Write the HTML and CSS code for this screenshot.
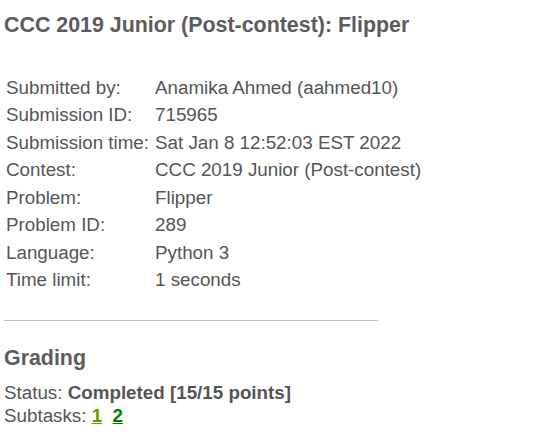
FILE: index.html
```html
<!DOCTYPE html>
<html lang="en">
<head>
    <meta charset="UTF-8">
    <title>Submission 715965</title>
    <link rel="stylesheet" href="styles.css">
</head>
<body>
    <div class="content">
        <h2>CCC 2019 Junior (Post-contest): Flipper</h2>

        <table class="info">
            <tr><td>Submitted by:</td><td>Anamika Ahmed (aahmed10)</td></tr>
            <tr><td>Submission ID:</td><td>715965</td></tr>
            <tr><td>Submission time:</td><td>Sat Jan 8 12:52:03 EST 2022</td></tr>
            <tr><td>Contest:</td><td>CCC 2019 Junior (Post-contest)</td></tr>
            <tr><td>Problem:</td><td>Flipper</td></tr>
            <tr><td>Problem ID:</td><td>289</td></tr>
            <tr><td>Language:</td><td>Python 3</td></tr>
            <tr><td>Time limit:</td><td>1 seconds</td></tr>
        </table>

        <hr>

        <h2>Grading</h2>
        <div class="status">Status: <b>Completed [15/15 points]</b></div>
        <div class="subtasks">Subtasks: <a href="#" class="sub-ok">1</a>&nbsp; <a href="#" class="sub-full">2</a></div>
    </div>
</body>
</html>
```

FILE: styles.css
```css
* {
    margin: 0;
    padding: 0;
    box-sizing: border-box;
}

body {
    font-family: 'Liberation Sans', Arial, sans-serif;
    font-size: 18.8px;
    color: #555;
    background: #fff;
}

.content {
    padding: 0 4px;
}

h2 {
    font-size: 21.4px;
    font-weight: bold;
    color: #5c5c5c;
}

.content > h2:first-child {
    margin-top: 13px;
    margin-bottom: 36px;
}

.info {
    border-collapse: collapse;
}

.info td {
    padding: 2px 4px 2px 2px;
    height: 27.5px;
    vertical-align: middle;
}

hr {
    width: 374px;
    border: none;
    border-top: 1px solid #c0c0c0;
    margin: 26px 0 25px;
}

.status,
.subtasks {
    line-height: 23px;
}

h2 + .status {
    margin-top: 10px;
}

a {
    font-weight: bold;
}

.sub-ok {
    color: #6b9a00;
}

.sub-full {
    color: #008000;
}
```
